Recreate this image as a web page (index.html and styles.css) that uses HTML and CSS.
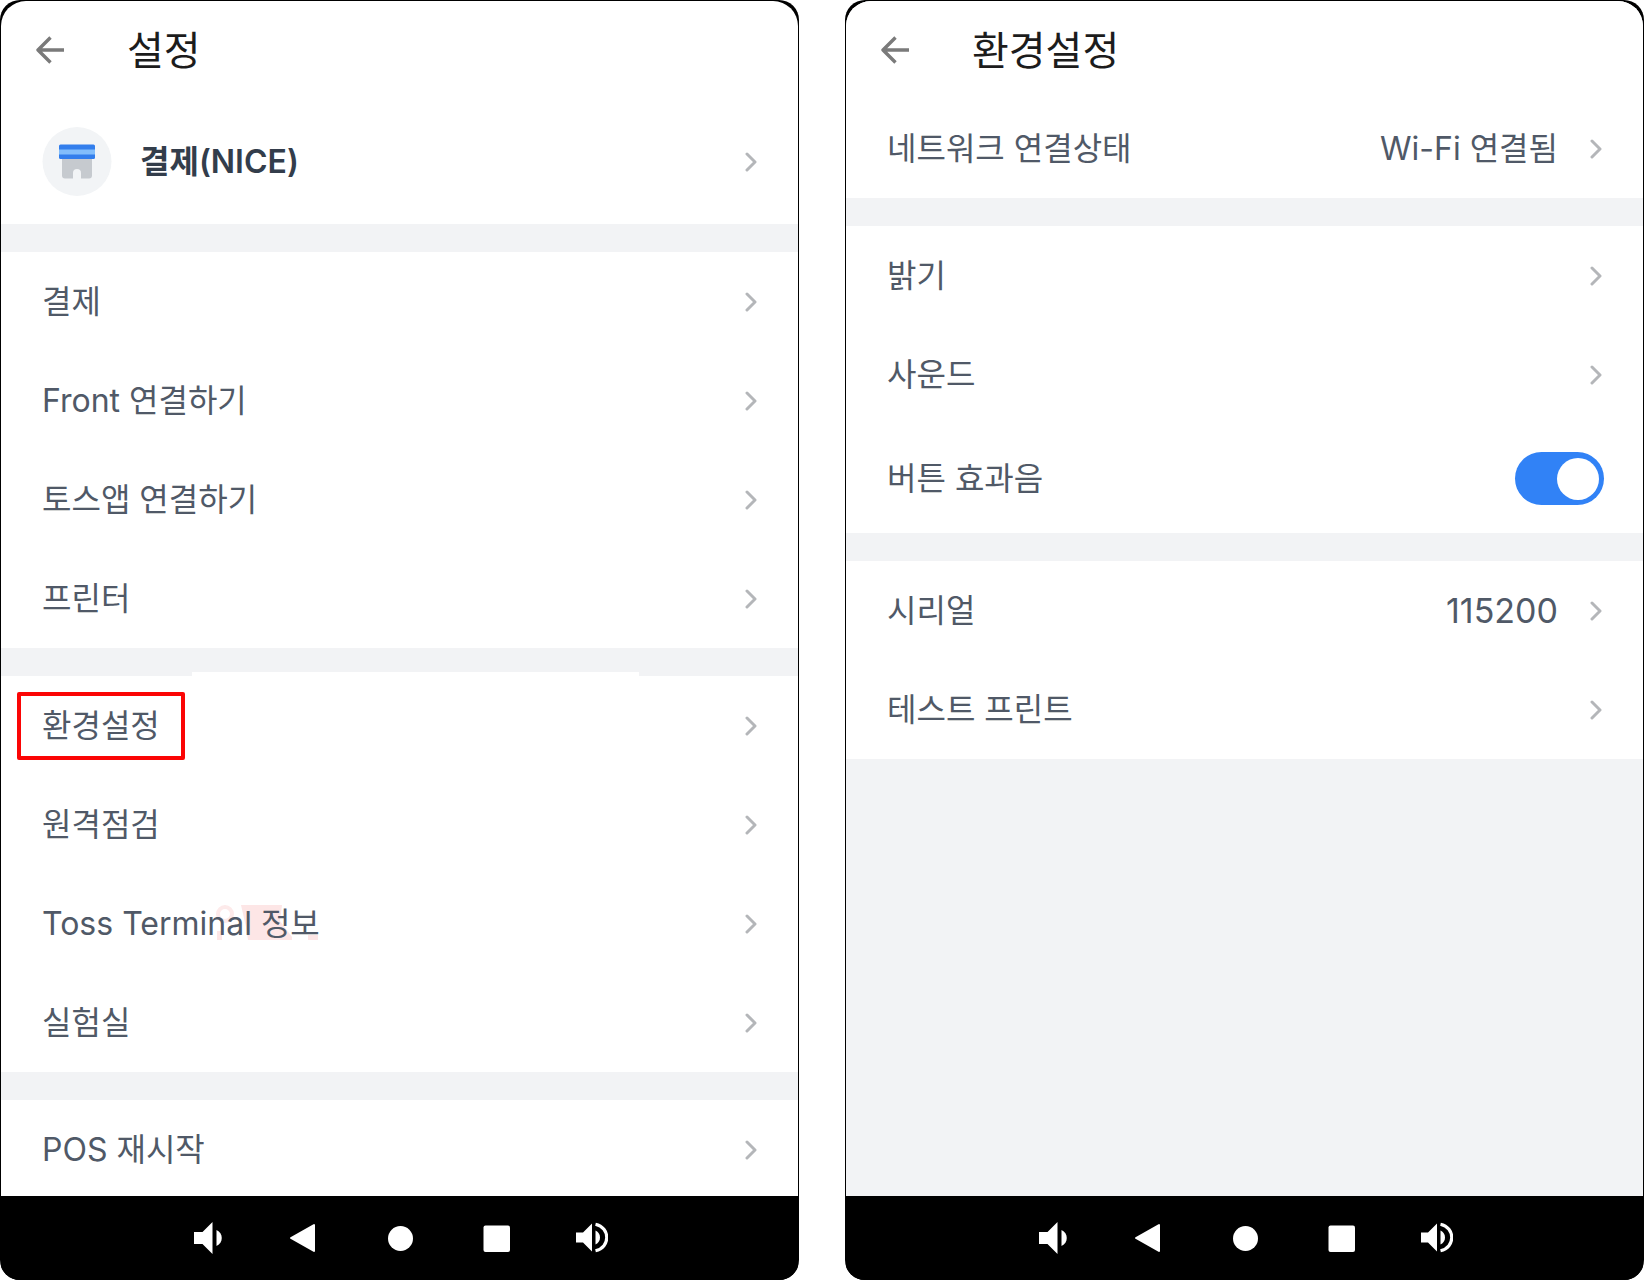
FILE: index.html
```html
<!DOCTYPE html>
<html lang="ko">
<head>
  <meta charset="UTF-8">
  <meta name="viewport" content="width=device-width, initial-scale=1.0">
  <title>설정</title>
  <link rel="stylesheet" href="styles.css">
</head>
<body>
  <!-- Shared icons -->
  <svg class="icon-defs" aria-hidden="true">
    <symbol id="icon-back" viewBox="0 0 28 28">
      <path d="M28 14H2M14.500 1.500L2 14l12.500 12.500" fill="none" stroke="currentColor" stroke-width="3.400" stroke-linejoin="round"/>
    </symbol>
    <symbol id="icon-chevron" viewBox="0 0 12 20">
      <path d="M2 2l8 8-8 8" fill="none" stroke="currentColor" stroke-width="3" stroke-linecap="round" stroke-linejoin="round"/>
    </symbol>
    <symbol id="icon-volume-down" viewBox="0 0 32 32">
      <path d="M2 10h8.500L20.500 0v32L10.500 22H2z" fill="currentColor"/>
      <path d="M24.500 8c7 3 7 13 0 16z" fill="currentColor"/>
    </symbol>
    <symbol id="icon-nav-back" viewBox="0 0 32 32">
      <path d="M3 16L26 3v26z" fill="currentColor" stroke="currentColor" stroke-width="2" stroke-linejoin="round"/>
    </symbol>
    <symbol id="icon-nav-home" viewBox="0 0 32 32">
      <circle cx="16.500" cy="16.500" r="12.500" fill="currentColor"/>
    </symbol>
    <symbol id="icon-nav-recent" viewBox="0 0 32 32">
      <rect x="3.500" y="3.500" width="26.500" height="26.500" rx="2" fill="currentColor"/>
    </symbol>
    <symbol id="icon-volume-up" viewBox="0 0 32 32">
      <path d="M0 10.500h7L16 1.500v28L7 20.500H0z" fill="currentColor"/>
      <path d="M19.500 8.500c6 2.500 6 11.500 0 14z" fill="currentColor"/>
      <path d="M19.500 2.200c15 3.300 15 23.300 0 26.600" fill="none" stroke="currentColor" stroke-width="3.200"/>
    </symbol>
  </svg>

  <main class="devices">
    <!-- Settings -->
    <section class="device">
      <div class="screen">
        <header class="app-bar">
          <button class="back-button" type="button" aria-label="뒤로"><svg><use href="#icon-back"/></svg></button>
          <h1 class="app-title">설정</h1>
        </header>

        <div class="group">
          <a class="row row-account" href="#">
            <svg class="store-icon" viewBox="0 0 70 70" aria-hidden="true">
              <circle cx="35" cy="34.500" r="34.500" fill="#f2f4f6"/>
              <path d="M20 30h30v18.500a3 3 0 0 1-3 3h-8V46a4 4 0 0 0-8 0v5.500h-8a3 3 0 0 1-3-3z" fill="#c6cacf"/>
              <rect x="17" y="17.500" width="36" height="14.500" rx="1.500" fill="#337eec"/>
              <rect x="17" y="22.500" width="36" height="5" fill="#82bdfb"/>
            </svg>
            <span class="row-label">결제(NICE)</span>
            <svg class="chevron"><use href="#icon-chevron"/></svg>
          </a>
        </div>

        <div class="group">
          <a class="row" href="#"><span class="row-label">결제</span><svg class="chevron"><use href="#icon-chevron"/></svg></a>
          <a class="row" href="#"><span class="row-label">Front 연결하기</span><svg class="chevron"><use href="#icon-chevron"/></svg></a>
          <a class="row" href="#"><span class="row-label">토스앱 연결하기</span><svg class="chevron"><use href="#icon-chevron"/></svg></a>
          <a class="row" href="#"><span class="row-label">프린터</span><svg class="chevron"><use href="#icon-chevron"/></svg></a>
        </div>

        <div class="group group-raised">
          <a class="row" href="#environment"><span class="row-label highlighted">환경설정</span><svg class="chevron"><use href="#icon-chevron"/></svg></a>
          <a class="row" href="#"><span class="row-label">원격점검</span><svg class="chevron"><use href="#icon-chevron"/></svg></a>
          <a class="row" href="#">
            <span class="row-label">Toss Terminal 정보
              <svg class="smudge" viewBox="0 0 104 36" aria-hidden="true">
                <circle cx="9" cy="9" r="7" fill="none" stroke="#fdeaea" stroke-width="4"/>
                <path d="M1 26h5v9H1zM25 0h41l-2 16 12 16v3H32l-2-13zM92 30h10v5H92z" fill="#fde6e6"/>
              </svg>
            </span>
            <svg class="chevron"><use href="#icon-chevron"/></svg>
          </a>
          <a class="row" href="#"><span class="row-label">실험실</span><svg class="chevron"><use href="#icon-chevron"/></svg></a>
        </div>

        <div class="group">
          <a class="row" href="#"><span class="row-label">POS 재시작</span><svg class="chevron"><use href="#icon-chevron"/></svg></a>
        </div>
      </div>

      <nav class="system-nav">
        <button type="button" aria-label="볼륨 낮추기"><svg><use href="#icon-volume-down"/></svg></button>
        <button type="button" aria-label="뒤로"><svg><use href="#icon-nav-back"/></svg></button>
        <button type="button" aria-label="홈"><svg><use href="#icon-nav-home"/></svg></button>
        <button type="button" aria-label="최근 앱"><svg><use href="#icon-nav-recent"/></svg></button>
        <button type="button" aria-label="볼륨 높이기"><svg><use href="#icon-volume-up"/></svg></button>
      </nav>
    </section>

    <!-- Environment settings -->
    <section class="device" id="environment">
      <div class="screen">
        <header class="app-bar">
          <button class="back-button" type="button" aria-label="뒤로"><svg><use href="#icon-back"/></svg></button>
          <h1 class="app-title">환경설정</h1>
        </header>

        <div class="group">
          <a class="row" href="#">
            <span class="row-label">네트워크 연결상태</span>
            <span class="row-value">Wi-Fi 연결됨</span>
            <svg class="chevron"><use href="#icon-chevron"/></svg>
          </a>
        </div>

        <div class="group">
          <a class="row" href="#"><span class="row-label">밝기</span><svg class="chevron"><use href="#icon-chevron"/></svg></a>
          <a class="row" href="#"><span class="row-label">사운드</span><svg class="chevron"><use href="#icon-chevron"/></svg></a>
          <div class="row row-toggle">
            <label class="row-label" for="button-sound">버튼 효과음</label>
            <input class="toggle" type="checkbox" role="switch" id="button-sound" checked>
          </div>
        </div>

        <div class="group">
          <a class="row" href="#">
            <span class="row-label">시리얼</span>
            <span class="row-value numeric">115200</span>
            <svg class="chevron"><use href="#icon-chevron"/></svg>
          </a>
          <a class="row" href="#"><span class="row-label">테스트 프린트</span><svg class="chevron"><use href="#icon-chevron"/></svg></a>
        </div>
      </div>

      <nav class="system-nav">
        <button type="button" aria-label="볼륨 낮추기"><svg><use href="#icon-volume-down"/></svg></button>
        <button type="button" aria-label="뒤로"><svg><use href="#icon-nav-back"/></svg></button>
        <button type="button" aria-label="홈"><svg><use href="#icon-nav-home"/></svg></button>
        <button type="button" aria-label="최근 앱"><svg><use href="#icon-nav-recent"/></svg></button>
        <button type="button" aria-label="볼륨 높이기"><svg><use href="#icon-volume-up"/></svg></button>
      </nav>
    </section>
  </main>
</body>
</html>
```
FILE: styles.css
```css
:root {
  --text-color: #505967;
  --strong-color: #333d4b;
  --divider-color: #f2f3f5;
  --primary-color: #3182f6;
  --row-height: 99px;
  --side-padding: 41px;
}

* {
  box-sizing: border-box;
}

body {
  margin: 0;
  background: white;
  color: var(--text-color);
  font-family: Inter, 'Noto Sans CJK KR', sans-serif;
  font-size: 32px;
  line-height: 40px;
}

button {
  padding: 0;
  border: none;
  background: transparent;
  color: inherit;
  cursor: pointer;
}

.icon-defs {
  position: absolute;
  width: 0;
  height: 0;
}

.devices {
  display: grid;
  grid-template-columns: 1fr 1fr;
  gap: 46px;
  height: 100vh;
}

/* Device frame */
.device {
  display: flex;
  flex-direction: column;
  min-width: 0;
  min-height: 0;
  padding: 1px 1px 0;
  border-radius: 20px;
  background: black;
  overflow: hidden;
}

.screen {
  flex: 1;
  min-height: 0;
  overflow-y: auto;
  scrollbar-width: none;
  border-radius: 25px 25px 0 0;
  background: var(--divider-color);
}

/* App bar */
.app-bar {
  display: flex;
  align-items: center;
  gap: 63px;
  height: 98px;
  padding: 0 35px;
  background: white;
}

.back-button {
  display: flex;
  color: #7a7a7a;
}

.back-button svg {
  width: 28px;
  height: 28px;
}

.app-title {
  margin: 0;
  padding-bottom: 4px;
  color: #1c1c1c;
  font-family: 'Noto Sans CJK KR', sans-serif;
  font-size: 40px;
  font-weight: 400;
  line-height: 48px;
}

/* Setting rows */
.group {
  position: relative;
  background: white;
}

.group + .group {
  margin-top: 28px;
}

.group-raised::before {
  content: '';
  position: absolute;
  top: -4px;
  left: 24%;
  right: 20%;
  height: 4px;
  background: white;
}

.row {
  display: flex;
  align-items: center;
  height: var(--row-height);
  padding: 0 var(--side-padding);
  color: var(--text-color);
  text-decoration: none;
}

.row-label {
  position: relative;
  z-index: 0;
  margin-right: auto;
}

.row-account {
  height: 125px;
  gap: 28px;
}

.row-account .row-label {
  color: var(--strong-color);
  font-weight: 600;
}

.row-toggle {
  height: 109px;
  padding-right: 39px;
}

.row-value {
  margin-right: 32px;
}

.numeric {
  font-size: 34px;
}

.chevron {
  flex: none;
  width: 12px;
  height: 20px;
  color: #b4b6b9;
}

.store-icon {
  flex: none;
  width: 70px;
  height: 70px;
}

.highlighted::after {
  content: '';
  position: absolute;
  inset: -14px -25px;
  border: 4px solid #fb0505;
  border-radius: 2px;
}

.smudge {
  position: absolute;
  z-index: -1;
  right: 0;
  top: 1px;
  width: 104px;
  height: 36px;
}

/* Switch */
.toggle {
  appearance: none;
  display: flex;
  align-items: center;
  width: 89px;
  height: 53px;
  margin: 0;
  padding: 0 5px;
  border-radius: 27px;
  background: #d1d6db;
  cursor: pointer;
}

.toggle::before {
  content: '';
  width: 42px;
  height: 42px;
  border-radius: 50%;
  background: white;
}

.toggle:checked {
  justify-content: flex-end;
  background: var(--primary-color);
}

/* System navigation */
.system-nav {
  display: flex;
  justify-content: center;
  height: 84px;
  background: black;
  color: white;
}

.system-nav button {
  display: flex;
  align-items: center;
  justify-content: center;
  width: 96px;
}

.system-nav svg {
  width: 32px;
  height: 32px;
}
```
